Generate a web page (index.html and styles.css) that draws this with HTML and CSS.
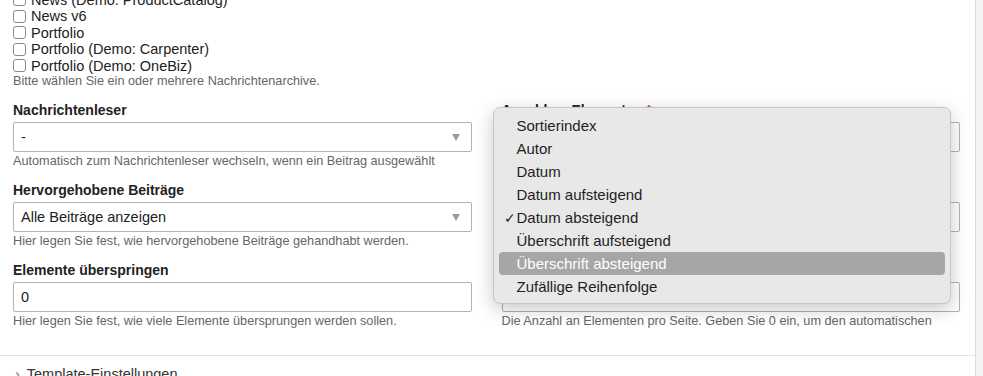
FILE: index.html
```html
<!DOCTYPE html>
<html lang="de">
<head>
    <meta charset="UTF-8">
    <title>Modul bearbeiten</title>
    <link rel="stylesheet" href="styles.css">
</head>
<body>
    <div class="page">
        <div class="panel">
            <div class="checkbox-list">
                <label class="check-row"><input type="checkbox"> News (Demo: ProductCatalog)</label>
                <label class="check-row"><input type="checkbox"> News v6</label>
                <label class="check-row"><input type="checkbox"> Portfolio</label>
                <label class="check-row"><input type="checkbox"> Portfolio (Demo: Carpenter)</label>
                <label class="check-row"><input type="checkbox"> Portfolio (Demo: OneBiz)</label>
                <p class="help">Bitte wählen Sie ein oder mehrere Nachrichtenarchive.</p>
            </div>

            <div class="grid">
                <div class="widget">
                    <h3 class="label">Nachrichtenleser</h3>
                    <div class="field select"><span>-</span><i class="arrow"></i></div>
                    <p class="help">Automatisch zum Nachrichtenleser wechseln, wenn ein Beitrag ausgewählt</p>
                </div>
                <div class="widget">
                    <h3 class="label">Anzahl an Elementen <span class="req">*</span></h3>
                    <div class="field"><span>0</span></div>
                    <p class="help">Die Anzahl an Elementen. Geben Sie 0 ein, um alle anzuzeigen.</p>
                </div>

                <div class="widget">
                    <h3 class="label">Hervorgehobene Beiträge</h3>
                    <div class="field select"><span>Alle Beiträge anzeigen</span><i class="arrow"></i></div>
                    <p class="help">Hier legen Sie fest, wie hervorgehobene Beiträge gehandhabt werden.</p>
                </div>
                <div class="widget">
                    <h3 class="label">Sortieren nach</h3>
                    <div class="field select open"><span>Datum absteigend</span><i class="arrow"></i>
                        <ul class="menu">
                            <li>Sortierindex</li>
                            <li>Autor</li>
                            <li>Datum</li>
                            <li>Datum aufsteigend</li>
                            <li class="checked">Datum absteigend</li>
                            <li>Überschrift aufsteigend</li>
                            <li class="hover">Überschrift absteigend</li>
                            <li>Zufällige Reihenfolge</li>
                        </ul>
                    </div>
                    <p class="help">Hier können Sie die Sortierreihenfolge festlegen.</p>
                </div>

                <div class="widget">
                    <h3 class="label">Elemente überspringen</h3>
                    <div class="field"><span>0</span></div>
                    <p class="help">Hier legen Sie fest, wie viele Elemente übersprungen werden sollen.</p>
                </div>
                <div class="widget">
                    <h3 class="label">Elemente pro Seite</h3>
                    <div class="field"><span>0</span></div>
                    <p class="help">Die Anzahl an Elementen pro Seite. Geben Sie 0 ein, um den automatischen</p>
                </div>
            </div>

            <div class="section">
                <span class="chevron">›</span> Template-Einstellungen
            </div>
        </div>
        <div class="scrollbar"></div>
    </div>
</body>
</html>
```

FILE: styles.css
```css
* {
    margin: 0;
    padding: 0;
    box-sizing: border-box;
}

body {
    background: #fff;
    font-family: 'Liberation Sans', Arial, sans-serif;
    color: #222;
    overflow: hidden;
}

.page {
    display: flex;
    height: 376px;
}

.panel {
    width: 976px;
    border-right: 1px solid #dcdcdc;
    overflow: hidden;
}

.scrollbar {
    flex: 1;
    background: #f3f3f3;
}

/* Checkbox list */
.checkbox-list {
    margin-top: -8.5px;
    padding: 0 15px 0 13px;
}

.check-row {
    display: flex;
    align-items: center;
    gap: 5px;
    height: 16.5px;
    font-size: 14.5px;
}

.check-row input {
    appearance: none;
    flex: none;
    width: 13px;
    height: 13px;
    border: 1px solid #8a8a8a;
    border-radius: 3px;
    background: #fff;
}

.help {
    font-size: 12.7px;
    line-height: 15px;
    color: #666;
    white-space: nowrap;
}

/* Widgets */
.grid {
    display: grid;
    grid-template-columns: 1fr 1fr;
    column-gap: 30px;
    padding: 13px 15px 0 13px;
}

.widget {
    height: 80px;
}

.label {
    font-size: 14px;
    font-weight: bold;
    line-height: 17px;
    margin-bottom: 3px;
}

.req {
    color: #c33;
}

.field {
    position: relative;
    display: flex;
    align-items: center;
    height: 30px;
    padding: 0 7px;
    border: 1px solid #b3b3b3;
    border-radius: 2px;
    font-size: 14.5px;
    margin-bottom: 2px;
}

.select span {
    flex: 1;
}

.arrow {
    width: 0;
    height: 0;
    border-left: 4px solid transparent;
    border-right: 4px solid transparent;
    border-top: 7px solid #999;
    margin-right: 4px;
}

/* Open dropdown */
.menu {
    position: absolute;
    left: -10px;
    top: -96px;
    width: 458px;
    list-style: none;
    padding: 6px 5px 5px;
    background: #e8e8e8;
    border: 1px solid #c6c6c6;
    border-radius: 7px;
    box-shadow: 0 5px 18px rgba(0, 0, 0, 0.22);
    z-index: 10;
}

.menu li {
    height: 23px;
    line-height: 23px;
    padding-left: 18px;
    font-size: 15px;
    color: #1e1e1e;
    border-radius: 4px;
}

.menu li.checked::before {
    content: "✓";
    display: inline-block;
    width: 13px;
    margin-left: -13px;
    font-size: 14px;
}

.menu li.hover {
    background: #a6a6a6;
    color: #fff;
}

/* Section */
.section {
    margin-top: 13px;
    border-top: 1px solid #e3e3e3;
    padding: 10px 0 0 15px;
    font-size: 14.5px;
    line-height: 17px;
    color: #333;
}

.chevron {
    display: inline-block;
    width: 8px;
    color: #777;
}
```
